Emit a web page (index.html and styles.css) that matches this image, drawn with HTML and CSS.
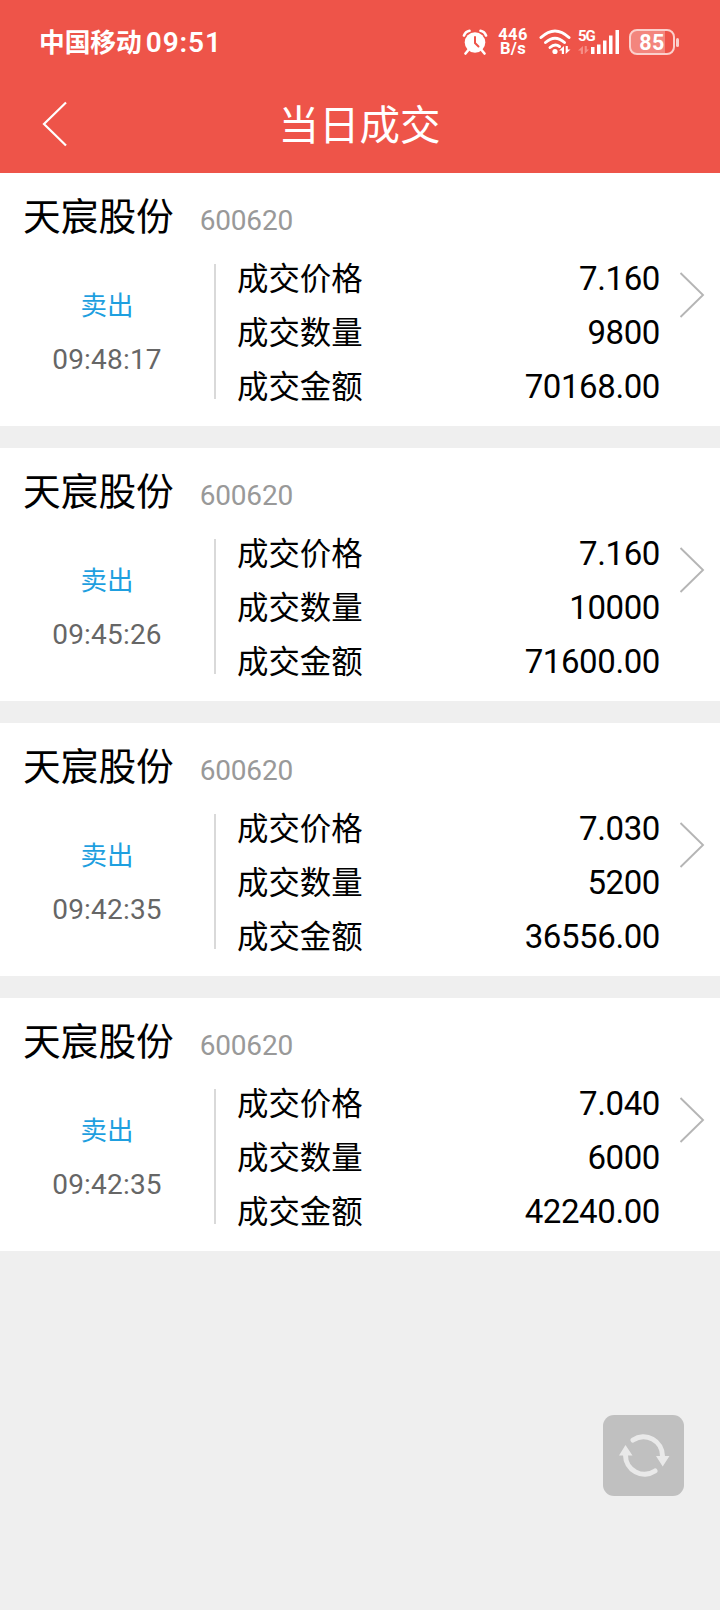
FILE: index.html
```
<!DOCTYPE html>
<html lang="zh-CN">
    <head>
        <meta charset="UTF-8">
        <meta name="viewport" content="width=device-width, initial-scale=1.0">
        <title>当日成交</title>
        <link rel="stylesheet" href="styles.css">
    </head>
    <body>
        <div class="header">
            <div class="status-bar">
                <span class="carrier">中国移动</span>
                <span class="clock">09:51</span>
                <div class="status-icons">
                    <svg class="icon-alarm" width="26" height="26" viewBox="0 0 26 26">
                        <circle cx="13" cy="13.5" r="10.3" fill="#fff"/>
                        <path d="M2 6.5Q3.500 2.500 7.500 1.800M24 6.500Q22.500 2.500 18.500 1.800M6 21.500L3.500 24.500M20 21.500L22.500 24.500" fill="none" stroke="#fff" stroke-width="2.600" stroke-linecap="round"/>
                        <path d="M13 8V14L16.500 17.500" fill="none" stroke="#ee5449" stroke-width="2" stroke-linecap="round"/>
                    </svg>
                    <div class="net-speed">446<br>B/s</div>
                    <svg class="icon-wifi" width="33" height="26" viewBox="0 0 33 26">
                        <g fill="none" stroke="#fff" stroke-width="3" stroke-linecap="round">
                            <path d="M2 8.500Q16 -4.500 30 8.500"/>
                            <path d="M6.500 13.500Q16 5 25.500 13.500"/>
                            <path d="M11 18.500Q16 14 20.500 17.500"/>
                        </g>
                        <circle cx="16" cy="22.500" r="2.600" fill="#fff"/>
                        <path d="M20 21.500L25 17V25H22.800V21.500ZM31.500 20.500L26.700 25V17H28.800V20.500Z" fill="#fff"/>
                    </svg>
                    <div class="signal">
                        <span class="signal-type">5G</span>
                        <svg width="42" height="26" viewBox="0 0 42 26">
                            <path d="M0 21.500L5 17V25H2.800V21.500ZM11 20.500L6.700 25V17H8.800V20.500Z" fill="#f58e86"/>
                            <path d="M13 18H16.500V25H13ZM19 15.500H22.500V25H19ZM25 11.500H28.500V25H25ZM31 6.500H34.500V25H31ZM37.500 1H41V25H37.500Z" fill="#fff"/>
                        </svg>
                    </div>
                    <div class="battery">85</div>
                    <div class="battery-tip"></div>
                </div>
            </div>
            <div class="title-bar">
                <svg class="back" width="28" height="46" viewBox="0 0 28 46">
                    <path d="M25 1.500L3 23L25 44.500" fill="none" stroke="#fff" stroke-width="2.200"/>
                </svg>
                <h1>当日成交</h1>
            </div>
        </div>

        <div class="deal-list">
            <div class="deal">
                <div class="deal-head">
                    <span class="stock-name">天宸股份</span>
                    <span class="stock-code">600620</span>
                </div>
                <div class="deal-body">
                    <div class="deal-side">
                        <span class="side-type">卖出</span>
                        <span class="side-time">09:48:17</span>
                    </div>
                    <div class="deal-info">
                        <div class="row"><span class="label">成交价格</span><span class="num">7.160</span></div>
                        <div class="row"><span class="label">成交数量</span><span class="num">9800</span></div>
                        <div class="row"><span class="label">成交金额</span><span class="num">70168.00</span></div>
                    </div>
                    <svg class="arrow" width="26" height="46" viewBox="0 0 26 46">
                        <path d="M1.500 1L24 23L1.500 45" fill="none" stroke="#b5b5b5" stroke-width="1.900"/>
                    </svg>
                </div>
            </div>

            <div class="deal">
                <div class="deal-head">
                    <span class="stock-name">天宸股份</span>
                    <span class="stock-code">600620</span>
                </div>
                <div class="deal-body">
                    <div class="deal-side">
                        <span class="side-type">卖出</span>
                        <span class="side-time">09:45:26</span>
                    </div>
                    <div class="deal-info">
                        <div class="row"><span class="label">成交价格</span><span class="num">7.160</span></div>
                        <div class="row"><span class="label">成交数量</span><span class="num">10000</span></div>
                        <div class="row"><span class="label">成交金额</span><span class="num">71600.00</span></div>
                    </div>
                    <svg class="arrow" width="26" height="46" viewBox="0 0 26 46">
                        <path d="M1.500 1L24 23L1.500 45" fill="none" stroke="#b5b5b5" stroke-width="1.900"/>
                    </svg>
                </div>
            </div>

            <div class="deal">
                <div class="deal-head">
                    <span class="stock-name">天宸股份</span>
                    <span class="stock-code">600620</span>
                </div>
                <div class="deal-body">
                    <div class="deal-side">
                        <span class="side-type">卖出</span>
                        <span class="side-time">09:42:35</span>
                    </div>
                    <div class="deal-info">
                        <div class="row"><span class="label">成交价格</span><span class="num">7.030</span></div>
                        <div class="row"><span class="label">成交数量</span><span class="num">5200</span></div>
                        <div class="row"><span class="label">成交金额</span><span class="num">36556.00</span></div>
                    </div>
                    <svg class="arrow" width="26" height="46" viewBox="0 0 26 46">
                        <path d="M1.500 1L24 23L1.500 45" fill="none" stroke="#b5b5b5" stroke-width="1.900"/>
                    </svg>
                </div>
            </div>

            <div class="deal">
                <div class="deal-head">
                    <span class="stock-name">天宸股份</span>
                    <span class="stock-code">600620</span>
                </div>
                <div class="deal-body">
                    <div class="deal-side">
                        <span class="side-type">卖出</span>
                        <span class="side-time">09:42:35</span>
                    </div>
                    <div class="deal-info">
                        <div class="row"><span class="label">成交价格</span><span class="num">7.040</span></div>
                        <div class="row"><span class="label">成交数量</span><span class="num">6000</span></div>
                        <div class="row"><span class="label">成交金额</span><span class="num">42240.00</span></div>
                    </div>
                    <svg class="arrow" width="26" height="46" viewBox="0 0 26 46">
                        <path d="M1.500 1L24 23L1.500 45" fill="none" stroke="#b5b5b5" stroke-width="1.900"/>
                    </svg>
                </div>
            </div>
        </div>

        <!-- floating refresh button -->
        <div class="refresh">
            <svg width="81" height="81" viewBox="0 0 81 81">
                <g fill="none" stroke="#e9e9e9" stroke-width="5" stroke-linecap="round">
                    <path d="M30 25A19 19 0 0 1 59.500 41"/>
                    <path d="M52 56A19 19 0 0 1 22.500 40"/>
                </g>
                <path d="M53 41H66.500L59.700 51.500ZM16 40.500H29.500L22.500 30Z" fill="#e9e9e9"/>
            </svg>
        </div>
    </body>
</html>
```
FILE: styles.css
```
body{
    margin: 0;
    min-height: 1610px;
    position: relative;
    background-color: #efefef;
    font-family: Roboto, "Noto Sans CJK SC", sans-serif;
    color: #000;
}
.header{
    height: 173px;
    background-color: #ee5449;
    color: #fff;
}
.status-bar{
    height: 84px;
    padding: 0 41px 0 39px;
    display: flex;
    align-items: center;
}
.carrier{
    padding-top: 2px;
    font-size: 25.7px;
    font-weight: 700;
    line-height: 84px;
}
.clock{
    margin-left: 4px;
    padding-top: 1px;
    font-size: 28px;
    font-weight: 600;
    letter-spacing: 0.9px;
}
.status-icons{
    margin-left: auto;
    display: flex;
    align-items: center;
}
.net-speed{
    margin: 0 10px 0 9px;
    width: 32px;
    text-align: center;
    font-size: 16.5px;
    font-weight: 700;
    line-height: 14px;
    letter-spacing: 0.3px;
}
.signal{
    position: relative;
    margin-left: 6px;
    height: 26px;
}
.signal-type{
    position: absolute;
    top: 0;
    left: 0;
    font-size: 15px;
    font-weight: 700;
    line-height: 14px;
    letter-spacing: -1px;
}
.battery{
    box-sizing: border-box;
    margin-left: 9px;
    width: 46px;
    height: 26px;
    border: 2px solid #fbd0cc;
    border-radius: 8px;
    background: linear-gradient(90deg, #f3857d 82%, #ee5449 82%);
    text-align: center;
    font-size: 21.5px;
    font-weight: 700;
    line-height: 23px;
    letter-spacing: 0.5px;
}
.battery-tip{
    margin-left: 1px;
    width: 3px;
    height: 9px;
    border-radius: 2px;
    background-color: #fbd0cc;
}
.title-bar{
    height: 80px;
    padding: 0 41px;
    display: flex;
    align-items: center;
}
.title-bar h1{
    flex: 1;
    margin: 0 29px 0 0;
    padding-top: 3px;
    font-size: 40.5px;
    font-weight: 400;
    line-height: 80px;
    text-align: center;
}
.deal-list{
    display: flex;
    flex-direction: column;
    gap: 22px;
}
.deal{
    height: 253px;
    background-color: #fff;
}
.deal-head{
    height: 79px;
    padding-left: 23px;
    display: flex;
    align-items: baseline;
    line-height: 88px;
}
.stock-name{
    font-size: 37.7px;
}
.stock-code{
    margin-left: 26px;
    font-size: 28px;
    letter-spacing: -0.2px;
    color: #999;
}
.deal-body{
    display: flex;
    height: 162px;
}
.deal-side{
    width: 214px;
    padding-top: 27px;
    box-sizing: border-box;
    display: flex;
    flex-direction: column;
    align-items: center;
    line-height: 54px;
}
.side-type{
    font-size: 26.5px;
    color: #1e9fdf;
}
.side-time{
    font-size: 28px;
    letter-spacing: 0.2px;
    color: #666;
}
.deal-info{
    position: relative;
    width: 423px;
    padding-left: 23px;
    flex: none;
}
.deal-info::before{
    content: "";
    position: absolute;
    left: 0;
    top: 12px;
    width: 2px;
    height: 135px;
    background-color: #d9d9d9;
}
.row{
    display: flex;
    justify-content: space-between;
    height: 54px;
    font-size: 31.4px;
    line-height: 54px;
}
.label{
    padding-top: 1px;
}
.num{
    font-size: 33px;
    letter-spacing: -0.4px;
}
.arrow{
    margin: 20px 0 0 19px;
}
.refresh{
    position: absolute;
    left: 603px;
    top: 1415px;
    width: 81px;
    height: 81px;
    border-radius: 11px;
    background-color: #c0c0c0;
}
```
